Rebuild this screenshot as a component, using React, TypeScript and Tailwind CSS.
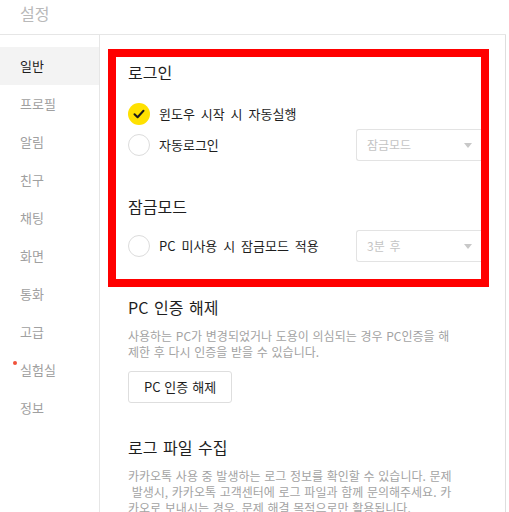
import React from "react";

const menu = ["일반", "프로필", "알림", "친구", "채팅", "화면", "통화", "고급", "실험실", "정보"];

const Check = ({ checked }: { checked?: boolean }) =>
  checked ? (
    <span className="flex h-[22px] w-[22px] shrink-0 items-center justify-center rounded-full bg-[#ffe100]">
      <svg width="12" height="10" viewBox="0 0 12 10" fill="none">
        <path d="M1.5 5.2 4.6 8.2 10.5 1.8" stroke="#1a1a1a" strokeWidth="2" strokeLinecap="round" strokeLinejoin="round" />
      </svg>
    </span>
  ) : (
    <span className="h-[22px] w-[22px] shrink-0 rounded-full border border-[#dcdcdc] bg-white" />
  );

const Select = ({ label }: { label: string }) => (
  <div className="flex h-[32px] w-[125px] shrink-0 items-center justify-between rounded-l-[3px] border border-r-0 border-[#e3e3e3] pl-[10px] pr-[9px] text-[12px] text-[#c4c4c4] [word-spacing:2px]">
    <span>{label}</span>
    <span className="h-0 w-0 border-x-[4.5px] border-t-[5px] border-x-transparent border-t-[#c8c8c8]" />
  </div>
);

export default function App() {
  return (
    <div
      className="flex h-[512px] w-[509px] flex-col overflow-hidden bg-white text-[#1e1e1e]"
      style={{ fontFamily: '"Noto Sans CJK KR", "Noto Sans", sans-serif' }}
    >
      <div className="h-[35px] w-[506px] shrink-0 border-b border-[#e6e6e6] pl-[20px] pt-[1px] text-[16px] leading-[24px] text-[#b9b9b9]">
        설정
      </div>
      <div className="flex min-h-0 flex-1">
        <div className="w-[100px] shrink-0 border-r border-[#e6e6e6] pt-[12px]">
          {menu.map((m, i) => (
            <div
              key={m}
              className={
                "relative flex h-[38px] items-center pl-[20px] text-[13px] " +
                (i === 0 ? "bg-[#f3f3f3] text-[#1e1e1e]" : "text-[#a0a0a0]")
              }
            >
              {m === "실험실" && (
                <span className="absolute left-[13px] top-[10px] h-[4px] w-[4px] rounded-full bg-[#f0523a]" />
              )}
              {m}
            </div>
          ))}
        </div>
        <div className="w-[406px] shrink-0 border-r border-[#dedede] pl-[8px] pt-[14px]">
          <div className="w-[381px] border-[8px] border-[#ff0000] pb-[17px] pl-[12px]">
            <div className="flex h-[30px] items-center text-[16px]">로그인</div>
            <div className="mt-[12px] flex h-[30px] items-center text-[13px] [word-spacing:3px]">
              <Check checked />
              <span className="ml-[9px]">윈도우 시작 시 자동실행</span>
            </div>
            <div className="flex h-[32px] items-center text-[13px] [word-spacing:3px]">
              <Check />
              <span className="ml-[9px] flex-1">자동로그인</span>
              <Select label="잠금모드" />
            </div>
            <div className="mt-[30px] flex h-[30px] items-center text-[16px]">잠금모드</div>
            <div className="mt-[9px] flex h-[32px] items-center text-[13px] [word-spacing:3px]">
              <Check />
              <span className="ml-[9px] flex-1">PC 미사용 시 잠금모드 적용</span>
              <Select label="3분 후" />
            </div>
          </div>
          <div className="pl-[20px]">
            <div className="mt-[7px] flex h-[26px] items-center text-[16px] [word-spacing:2px]">PC 인증 해제</div>
            <p className="mt-[8px] whitespace-pre text-[12px] leading-[16px] text-[#a3a3a3] [word-spacing:1px]">
              {"사용하는 PC가 변경되었거나 도용이 의심되는 경우 PC인증을 해\n제한 후 다시 인증을 받을 수 있습니다."}
            </p>
            <button className="mt-[11px] flex h-[32px] w-[104px] items-center justify-center rounded-[3px] border border-[#dedede] text-[13px] text-[#1e1e1e] [word-spacing:1px]">
              PC 인증 해제
            </button>
            <div className="mt-[31px] flex h-[26px] items-center text-[16px] [word-spacing:2px]">로그 파일 수집</div>
            <p className="mt-[8px] whitespace-pre text-[12px] leading-[16px] text-[#a3a3a3] [word-spacing:1px]">
              {"카카오톡 사용 중 발생하는 로그 정보를 확인할 수 있습니다. 문제\n 발생시, 카카오톡 고객센터에 로그 파일과 함께 문의해주세요. 카\n카오로 보내시는 경우, 문제 해결 목적으로만 활용됩니다."}
            </p>
          </div>
        </div>
      </div>
    </div>
  );
}
